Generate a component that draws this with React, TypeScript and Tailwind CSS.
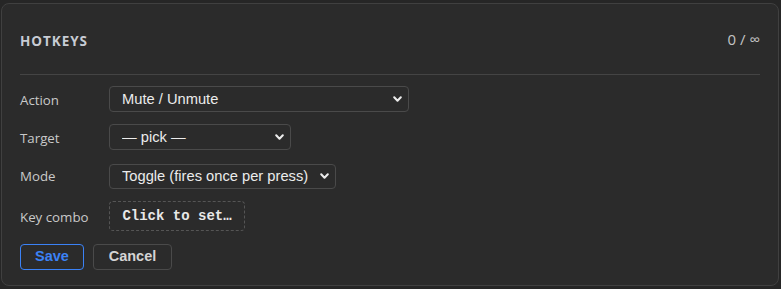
import { useState } from "react";

type Option = { value: string; label: string };

const actionOptions: Option[] = [
    { value: "mute", label: "Mute / Unmute" },
    { value: "deafen", label: "Deafen / Undeafen" },
    { value: "ptt", label: "Push to talk" },
];

const targetOptions: Option[] = [{ value: "", label: "— pick —" }];

const modeOptions: Option[] = [
    { value: "toggle", label: "Toggle (fires once per press)" },
    { value: "hold", label: "Hold (active while held)" },
];

function Chevron() {
    return (
        <svg
            className="pointer-events-none absolute right-[6px] top-1/2 -translate-y-1/2"
            width="11"
            height="11"
            viewBox="0 0 10 10"
            fill="none"
        >
            <path
                d="M2 3.5 L5 6.5 L8 3.5"
                stroke="#ececec"
                strokeWidth="1.9"
                strokeLinecap="round"
                strokeLinejoin="round"
            />
        </svg>
    );
}

function SelectField({
    options,
    value,
    onChange,
    className,
}: {
    options: Option[];
    value: string;
    onChange: (v: string) => void;
    className: string;
}) {
    return (
        <div className={`relative ${className}`}>
            <select
                value={value}
                onChange={(e) => onChange(e.target.value)}
                className="h-full w-full appearance-none rounded-[4px] border border-[#4a4a4a] bg-[#2b2b2b] pl-[12px] pr-6 font-['Liberation_Sans',Arial,sans-serif] text-[14.7px] text-[#ececec] outline-none"
            >
                {options.map((o) => (
                    <option key={o.value} value={o.value}>
                        {o.label}
                    </option>
                ))}
            </select>
            <Chevron />
        </div>
    );
}

function Row({ label, children }: { label: string; children: React.ReactNode }) {
    return (
        <div className="flex items-center">
            <span className="w-[89px] shrink-0 pt-[3px] text-[13.3px] text-[#c9c9c9]">{label}</span>
            {children}
        </div>
    );
}

export default function App() {
    const [action, setAction] = useState("mute");
    const [target, setTarget] = useState("");
    const [mode, setMode] = useState("toggle");

    return (
        <div className="h-[289px] w-[781px] bg-[#262626] pb-[3px] pl-[1px] pr-[2px] pt-[3px] font-['Open_Sans',sans-serif]">
            <div className="flex h-full flex-col rounded-[8px] border border-[#404040] bg-[#2b2b2b] px-[18px] pt-[22px]">
                <div className="flex h-[26px] items-start justify-between">
                    <h2 className="mt-[5px] text-[13.5px] font-bold tracking-[0.07em] text-[#c8ccd4]">
                        HOTKEYS
                    </h2>
                    <span className="mt-[3px] text-[15px] leading-[20px] text-[#c4c4c4]">0 / ∞</span>
                </div>

                <div className="mt-[22px] h-px bg-[#444444]" />

                <div className="mt-[11px] flex flex-col">
                    <Row label="Action">
                        <SelectField
                            options={actionOptions}
                            value={action}
                            onChange={setAction}
                            className="h-[26px] w-[300px]"
                        />
                    </Row>
                    <div className="mt-[12px]">
                        <Row label="Target">
                            <SelectField
                                options={targetOptions}
                                value={target}
                                onChange={setTarget}
                                className="h-[26px] w-[182px]"
                            />
                        </Row>
                    </div>
                    <div className="mt-[13px]">
                        <Row label="Mode">
                            <SelectField
                                options={modeOptions}
                                value={mode}
                                onChange={setMode}
                                className="h-[25px] w-[227px]"
                            />
                        </Row>
                    </div>
                    <div className="mt-[13px]">
                        <Row label="Key combo">
                            <button className="h-[30px] w-[136px] rounded-[4px] border border-dashed border-[#555555] font-['Liberation_Mono',monospace] text-[14px] font-bold text-[#e8e8e8]">
                                Click to set…
                            </button>
                        </Row>
                    </div>
                    <div className="mt-[13px] flex gap-[9px] font-['Liberation_Sans',Arial,sans-serif]">
                        <button className="h-[26px] w-[64px] rounded-[4px] border border-[#3b82f6] text-[14.5px] font-bold text-[#3b82f6]">
                            Save
                        </button>
                        <button className="h-[26px] w-[79px] rounded-[4px] border border-[#4a4a4a] text-[14.5px] font-bold text-[#d4d4d4]">
                            Cancel
                        </button>
                    </div>
                </div>
            </div>
        </div>
    );
}
